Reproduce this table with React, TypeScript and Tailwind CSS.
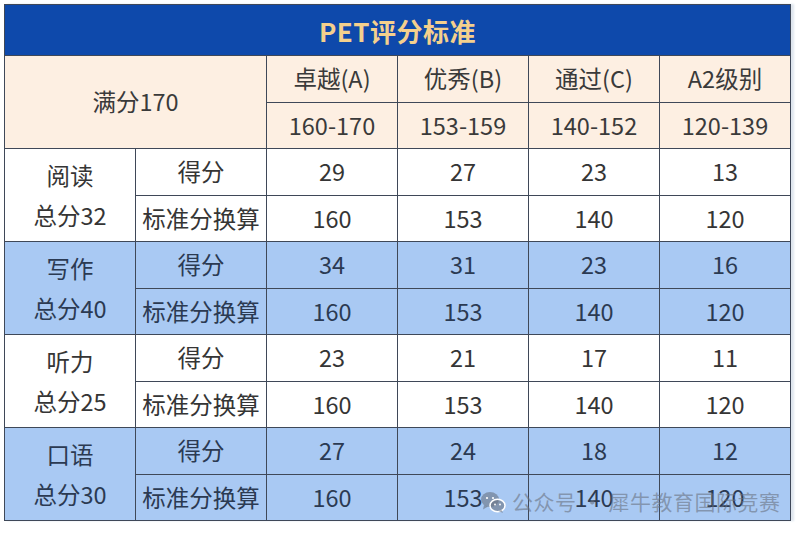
const font = { fontFamily: '"Noto Sans CJK SC", "Noto Sans", sans-serif' };

type Section = {
  name: string;
  total: string;
  raw: string[];
  scaled: string[];
  blue: boolean;
};

const sections: Section[] = [
  { name: "阅读", total: "总分32", raw: ["29", "27", "23", "13"], scaled: ["160", "153", "140", "120"], blue: false },
  { name: "写作", total: "总分40", raw: ["34", "31", "23", "16"], scaled: ["160", "153", "140", "120"], blue: true },
  { name: "听力", total: "总分25", raw: ["23", "21", "17", "11"], scaled: ["160", "153", "140", "120"], blue: false },
  { name: "口语", total: "总分30", raw: ["27", "24", "18", "12"], scaled: ["160", "153", "140", "120"], blue: true },
];

const grades = ["卓越(A)", "优秀(B)", "通过(C)", "A2级别"];
const ranges = ["160-170", "153-159", "140-152", "120-139"];

function Cell({ children, className = "" }: { children: React.ReactNode; className?: string }) {
  return <div className={`flex items-center justify-center text-[23.5px] ${className}`}>{children}</div>;
}

function WeChatIcon() {
  return (
    <svg width="26" height="24" viewBox="0 0 26 24" fill="currentColor">
      <ellipse cx="10" cy="9.5" rx="9" ry="7.5" />
      <path d="M4 15 L3 19.5 L8 16.5 Z" />
      <ellipse cx="17.5" cy="15.5" rx="7.5" ry="6.2" fill="currentColor" stroke="white" strokeWidth="1.5" />
      <path d="M21.5 20 L23 23 L18.5 21 Z" />
      <circle cx="7" cy="8" r="1.1" fill="white" />
      <circle cx="13" cy="8" r="1.1" fill="white" />
      <circle cx="15" cy="14.5" r="0.9" fill="white" />
      <circle cx="20" cy="14.5" r="0.9" fill="white" />
    </svg>
  );
}

export default function App() {
  return (
    <div className="relative w-[800px] h-[533px] bg-white overflow-hidden" style={font}>
      <div className="pt-[4px] pl-[4px]">
        <div className="w-[787px] grid grid-cols-6 grid-rows-[50px_46px_45px_repeat(8,45.5px)] gap-px p-px bg-[#3f4858] shadow-[3px_0_2px_#dfe6ee]">
          <div className="col-span-6 bg-[#0e49ab] flex items-center justify-center text-[26px] font-bold text-[#f4d08d] tracking-[0.5px]">
            PET评分标准
          </div>
          <Cell className="col-span-2 row-span-2 bg-[#fdefe2] text-[#3a3a3a]">满分170</Cell>
          {grades.map((g) => (
            <Cell key={g} className="bg-[#fdefe2] text-[#3a3a3a]">{g}</Cell>
          ))}
          {ranges.map((r) => (
            <Cell key={r} className="bg-[#fdefe2] text-[#3a3a3a]">{r}</Cell>
          ))}
          {sections.map((s) => {
            const bg = s.blue ? "bg-[#a9c9f3] text-[#2b3a52]" : "bg-white text-[#353535]";
            return [
              <div key={s.name + "-h"} className={`row-span-2 flex flex-col items-center justify-center text-[23.5px] leading-[40px] ${bg}`}>
                <span>{s.name}</span>
                <span>{s.total}</span>
              </div>,
              <Cell key={s.name + "-r"} className={bg}>得分</Cell>,
              ...s.raw.map((v, i) => (
                <Cell key={s.name + "-rv" + i} className={bg}>{v}</Cell>
              )),
              <Cell key={s.name + "-s"} className={bg}>标准分换算</Cell>,
              ...s.scaled.map((v, i) => (
                <Cell key={s.name + "-sv" + i} className={bg}>{v}</Cell>
              )),
            ];
          })}
        </div>
      </div>
      <div className="absolute left-[480px] top-[486px] flex items-center gap-[6px] text-[21px] text-[rgba(105,115,130,0.6)] pointer-events-none">
        <WeChatIcon />
        <span className="tracking-[0.5px]">公众号 · 犀牛教育国际竞赛</span>
      </div>
    </div>
  );
}
